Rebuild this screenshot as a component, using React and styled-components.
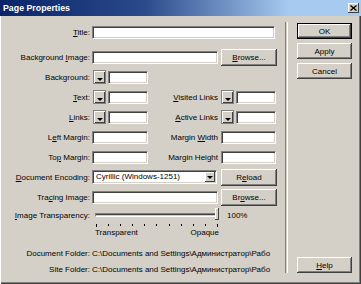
import React from 'react';
import styled, { createGlobalStyle } from 'styled-components';

const GlobalStyle = createGlobalStyle`
  html, body { margin: 0; padding: 0; background: #d4d0c8; }
  body { font-family: "Liberation Sans", Arial, sans-serif; }
`;

const Window = styled.div`
  width: 361px;
  height: 284px;
  box-sizing: border-box;
  background: #d4d0c8;
  box-shadow: inset 1px 0 #ffffff, inset -1px -1px #404040, inset -2px -2px #808080;
  display: flex;
  flex-direction: column;
  overflow: hidden;
  color: #000;
  font-size: 8px;
`;

const TitleBar = styled.div`
  height: 16px;
  flex: none;
  display: flex;
  align-items: center;
  justify-content: space-between;
  padding: 0 2px 0 3px;
  background: linear-gradient(90deg, #0a246a 0%, #2a4a8a 40%, #a6caf0 80%, #a6caf0 100%);
`;

const Caption = styled.span`
  color: #fff;
  font-weight: bold;
  font-size: 8.8px;
`;

const CloseBtn = styled.div`
  width: 11px;
  height: 10px;
  background: #d4d0c8;
  box-shadow: inset -1px -1px #404040, inset 1px 1px #fff;
  display: flex;
  align-items: center;
  justify-content: center;
`;

const Body = styled.div`
  flex: 1;
  display: flex;
`;

const Form = styled.div`
  width: 285px;
  flex: none;
  padding-top: 6px;
  display: flex;
  flex-direction: column;
`;

const Row = styled.div`
  display: grid;
  grid-template-columns: 90px 56px 68px 56px;
  column-gap: 2px;
  align-items: center;
  height: ${p => p.h || 20}px;
  margin-top: ${p => p.mt || 0}px;
`;

const Label = styled.span`
  text-align: right;
  white-space: nowrap;
`;

const Key = styled.u``;

const Field = styled.div`
  box-sizing: border-box;
  height: 13px;
  width: ${p => p.w}px;
  background: #fff;
  border-top: 1px solid #808080;
  border-left: 1px solid #808080;
  border-bottom: 1px solid #fff;
  border-right: 1px solid #fff;
  box-shadow: inset 1px 1px #404040, inset -1px -1px #d4d0c8;
  grid-column: ${p => p.span || 'auto'};
  margin-left: ${p => p.ml || 0}px;
`;

const ColorCell = styled.div`
  display: flex;
  align-items: center;
  gap: 2px;
  padding-left: 1px;
`;

const Swatch = styled.div`
  box-sizing: border-box;
  width: 13px;
  height: 14px;
  background: #d4d0c8;
  border: 1px solid #808080;
  box-shadow: inset 1px 1px #fff, inset -1px -1px #404040;
  position: relative;
  &::after {
    content: '';
    position: absolute;
    right: 2px;
    bottom: 2px;
    border-left: 3px solid transparent;
    border-right: 3px solid transparent;
    border-top: 3px solid #000;
  }
`;

const Button = styled.div`
  box-sizing: border-box;
  width: ${p => p.w || 55}px;
  height: ${p => p.h || 16}px;
  margin-left: ${p => p.ml || 0}px;
  background: #d4d0c8;
  display: flex;
  align-items: center;
  justify-content: center;
  box-shadow: ${p => p.def
    ? 'inset 0 0 0 1px #000, inset -2px -2px #404040, inset 2px 2px #fff, inset -3px -3px #808080'
    : 'inset -1px -1px #404040, inset 1px 1px #fff, inset -2px -2px #808080'};
`;

const Select = styled.div`
  box-sizing: border-box;
  grid-column: 2 / 4;
  width: 125px;
  height: 14px;
  background: #fff;
  border-top: 1px solid #808080;
  border-left: 1px solid #808080;
  border-bottom: 1px solid #fff;
  border-right: 1px solid #fff;
  box-shadow: inset 1px 1px #404040, inset -1px -1px #d4d0c8;
  display: flex;
  align-items: center;
  padding: 1px 1px 1px 3px;
  white-space: nowrap;
`;

const SelectText = styled.span`
  flex: 1;
  line-height: 10px;
`;

const DropBtn = styled.div`
  width: 10px;
  height: 10px;
  background: #d4d0c8;
  box-shadow: inset -1px -1px #404040, inset 1px 1px #fff;
  display: flex;
  align-items: center;
  justify-content: center;
  &::after {
    content: '';
    border-left: 3px solid transparent;
    border-right: 3px solid transparent;
    border-top: 3px solid #000;
  }
`;

const SliderRow = styled.div`
  display: grid;
  grid-template-columns: 90px 130px auto;
  column-gap: 2px;
  align-items: center;
  height: 16px;
`;

const Slider = styled.div`
  position: relative;
  height: 16px;
`;

const Track = styled.div`
  position: absolute;
  left: 3px;
  right: 5px;
  top: 6px;
  height: 2px;
  background: #d4d0c8;
  border-top: 1px solid #808080;
  border-left: 1px solid #808080;
  border-bottom: 1px solid #fff;
  box-shadow: inset 0 1px #404040;
`;

const Thumb = styled.div`
  position: absolute;
  right: 3px;
  top: 1px;
  width: 4px;
  height: 12px;
  background: #d4d0c8;
  box-shadow: inset -1px -1px #404040, inset 1px 1px #fff;
`;

const Percent = styled.span`
  padding-left: 3px;
`;

const Ticks = styled.div`
  margin-left: 96px;
  width: 122px;
  height: 4px;
  display: flex;
  justify-content: space-between;
  margin-top: 1px;
`;

const Tick = styled.div`
  width: 1px;
  height: ${p => (p.end ? 3 : 2)}px;
  background: #000;
`;

const ScaleLabels = styled.div`
  margin-left: 95px;
  width: 124px;
  display: flex;
  justify-content: space-between;
  height: 10px;
  line-height: 10px;
`;

const PathRow = styled.div`
  display: grid;
  grid-template-columns: 90px 1fr;
  column-gap: 2px;
  height: 16px;
  align-items: center;
  margin-top: ${p => p.mt || 0}px;
  white-space: nowrap;
`;

const Separator = styled.div`
  width: 1px;
  margin: 6px 0 11px;
  border-left: 1px solid #808080;
  border-right: 1px solid #fff;
`;

const ButtonCol = styled.div`
  flex: 1;
  display: flex;
  flex-direction: column;
  gap: 4px;
  padding: 7px 0 11px 9px;
`;

const Spacer = styled.div`
  flex: 1;
`;

const colorRows = [
  { l: 'ext:', k: 'T', r: 'isited Links', rk: 'V' },
  { l: 'inks:', k: 'L', r: 'ctive Links', rk: 'A' },
];

export default function App() {
  return (
    <>
      <GlobalStyle />
      <Window>
        <TitleBar>
          <Caption>Page Properties</Caption>
          <CloseBtn>
            <svg width="7" height="6" viewBox="0 0 7 6">
              <path d="M0.5 0.5 L6.5 5.5 M6.5 0.5 L0.5 5.5" stroke="#000" strokeWidth="1.4" />
            </svg>
          </CloseBtn>
        </TitleBar>
        <Body>
          <Form>
            <Row>
              <Label><Key>T</Key>itle:</Label>
              <Field w={183} span="2 / 5" />
            </Row>
            <Row mt={5}>
              <Label>Background <Key>I</Key>mage:</Label>
              <Field w={126} span="2 / 4" />
              <Button w={56} h={17} ml={1}><span><Key>B</Key>rowse...</span></Button>
            </Row>
            <Row>
              <Label>Background:</Label>
              <ColorCell><Swatch /><Field w={40} /></ColorCell>
            </Row>
            {colorRows.map(r => (
              <Row key={r.k}>
                <Label><Key>{r.k}</Key>{r.l}</Label>
                <ColorCell><Swatch /><Field w={40} /></ColorCell>
                <Label><Key>{r.rk}</Key>{r.r}</Label>
                <ColorCell><Swatch /><Field w={40} /></ColorCell>
              </Row>
            ))}
            <Row>
              <Label>L<Key>e</Key>ft Margin:</Label>
              <Field w={56} />
              <Label>Margin <Key>W</Key>idth</Label>
              <Field w={55} ml={1} />
            </Row>
            <Row>
              <Label>To<Key>p</Key> Margin:</Label>
              <Field w={56} />
              <Label>Margin Hei<Key>g</Key>ht</Label>
              <Field w={55} ml={1} />
            </Row>
            <Row>
              <Label><Key>D</Key>ocument Encoding:</Label>
              <Select>
                <SelectText>Cyrillic (Windows-1251)</SelectText>
                <DropBtn />
              </Select>
              <Button w={56} h={17} ml={1}><span>R<Key>e</Key>load</span></Button>
            </Row>
            <Row>
              <Label>Tra<Key>c</Key>ing Image:</Label>
              <Field w={126} span="2 / 4" />
              <Button w={56} h={17} ml={1}><span>Br<Key>o</Key>wse...</span></Button>
            </Row>
            <SliderRow>
              <Label><Key>I</Key>mage Transparency:</Label>
              <Slider><Track /><Thumb /></Slider>
              <Percent>100%</Percent>
            </SliderRow>
            <Ticks>
              {Array.from({ length: 11 }).map((_, i) => (
                <Tick key={i} end={i === 0 || i === 10} />
              ))}
            </Ticks>
            <ScaleLabels>
              <span>Transparent</span>
              <span>Opaque</span>
            </ScaleLabels>
            <PathRow mt={7}>
              <Label>Document Folder:</Label>
              <span>C:\Documents and Settings\Администратор\Рабо</span>
            </PathRow>
            <PathRow>
              <Label>Site Folder:</Label>
              <span>C:\Documents and Settings\Администратор\Рабо</span>
            </PathRow>
          </Form>
          <Separator />
          <ButtonCol>
            <Button def>OK</Button>
            <Button>Apply</Button>
            <Button>Cancel</Button>
            <Spacer />
            <Button><span><Key>H</Key>elp</span></Button>
          </ButtonCol>
        </Body>
      </Window>
    </>
  );
}
